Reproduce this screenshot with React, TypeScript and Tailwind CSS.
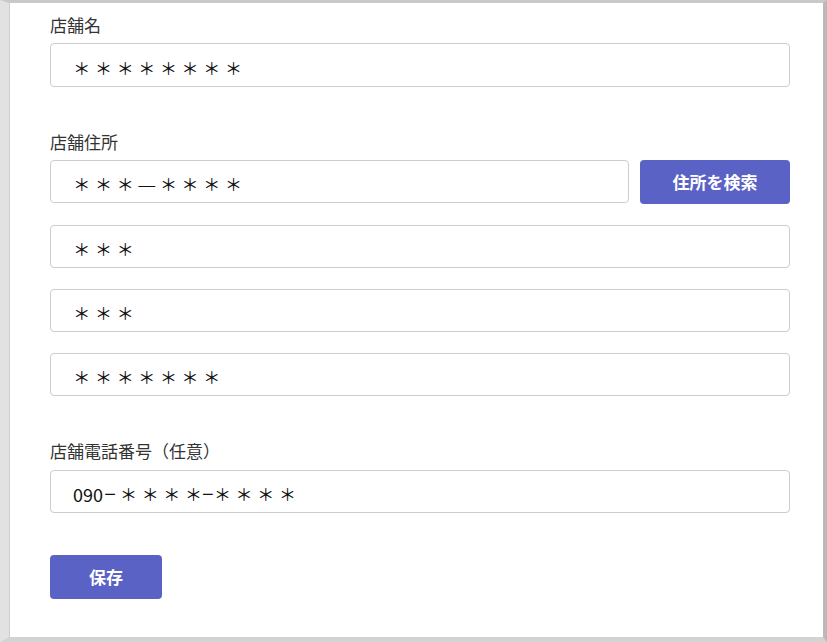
import React from "react";

const FONT = { fontFamily: "'Noto Sans CJK JP', 'Noto Sans', sans-serif" };
const LIB = { fontFamily: "'Liberation Sans', sans-serif" };

function Stars({ n }: { n: number }) {
  return (
    <>
      {Array.from({ length: n }).map((_, i) => (
        <span key={i} className="inline-flex w-[21.67px] justify-center text-[17px]">
          ＊
        </span>
      ))}
    </>
  );
}

function StarGroup({ className = "" }: { className?: string }) {
  return (
    <span className={`flex gap-[4.67px] ${className}`}>
      {Array.from({ length: 4 }).map((_, i) => (
        <span key={i} className="inline-flex w-[17px] justify-center text-[17px]">
          ＊
        </span>
      ))}
    </span>
  );
}

function Dash({ className = "" }: { className?: string }) {
  return (
    <span style={LIB} className={`inline-flex w-[12px] justify-center text-[20px] font-light ${className}`}>
      −
    </span>
  );
}

function Field({ children, className = "" }: { children: React.ReactNode; className?: string }) {
  return (
    <div
      className={`flex h-[43px] items-center rounded-[4px] border border-[#cdcdcd] bg-white pl-[20px] leading-none text-[#111111] ${className}`}
    >
      <div className="flex translate-y-[2px] items-center">{children}</div>
    </div>
  );
}

function Label({ children }: { children: React.ReactNode }) {
  return <div className="h-[24px] text-[17px] leading-[24px] text-[#333333]">{children}</div>;
}

export default function App() {
  return (
    <div
      style={FONT}
      className="box-border h-[642px] w-[827px] border-t-[3px] border-r-[4px] border-b-[5px] border-l-[9px] border-t-[#c9c9c9] border-r-[#b9b9b9] border-b-[#d3d3d3] border-l-[#e2e2e2] bg-white"
    >
      <div className="flex h-full flex-col border-l border-[#cfcfcf] pl-[40px] pr-[33px] pt-[10px]">
        <Label>店舗名</Label>
        <div className="mt-[6px]">
          <Field className="h-[44px]">
            <Stars n={8} />
          </Field>
        </div>

        <div className="mt-[43px]">
          <Label>店舗住所</Label>
        </div>
        <div className="mt-[6px] flex gap-[11px]">
          <Field className="flex-1">
            <Stars n={3} />
            <span className="inline-flex w-[21.67px] justify-center text-[21px] font-light">—</span>
            <Stars n={4} />
          </Field>
          <button className="h-[44px] w-[150px] rounded-[4px] bg-[#5a62c6] text-[17px] font-bold text-white">
            住所を検索
          </button>
        </div>
        <div className="mt-[21px]">
          <Field>
            <Stars n={3} />
          </Field>
        </div>
        <div className="mt-[21px]">
          <Field>
            <Stars n={3} />
          </Field>
        </div>
        <div className="mt-[21px]">
          <Field>
            <Stars n={7} />
          </Field>
        </div>

        <div className="mt-[43px]">
          <Label>店舗電話番号（任意）</Label>
        </div>
        <div className="mt-[7px]">
          <Field className="pl-[22px]">
            <span className="text-[18px]">090</span>
            <Dash className="ml-[1px]" />
            <StarGroup className="ml-[4px]" />
            <Dash />
            <StarGroup />
          </Field>
        </div>

        <div className="mt-[42px]">
          <button className="h-[44px] w-[112px] rounded-[4px] bg-[#5a62c6] text-[17px] font-bold text-white">
            保存
          </button>
        </div>
      </div>
    </div>
  );
}
